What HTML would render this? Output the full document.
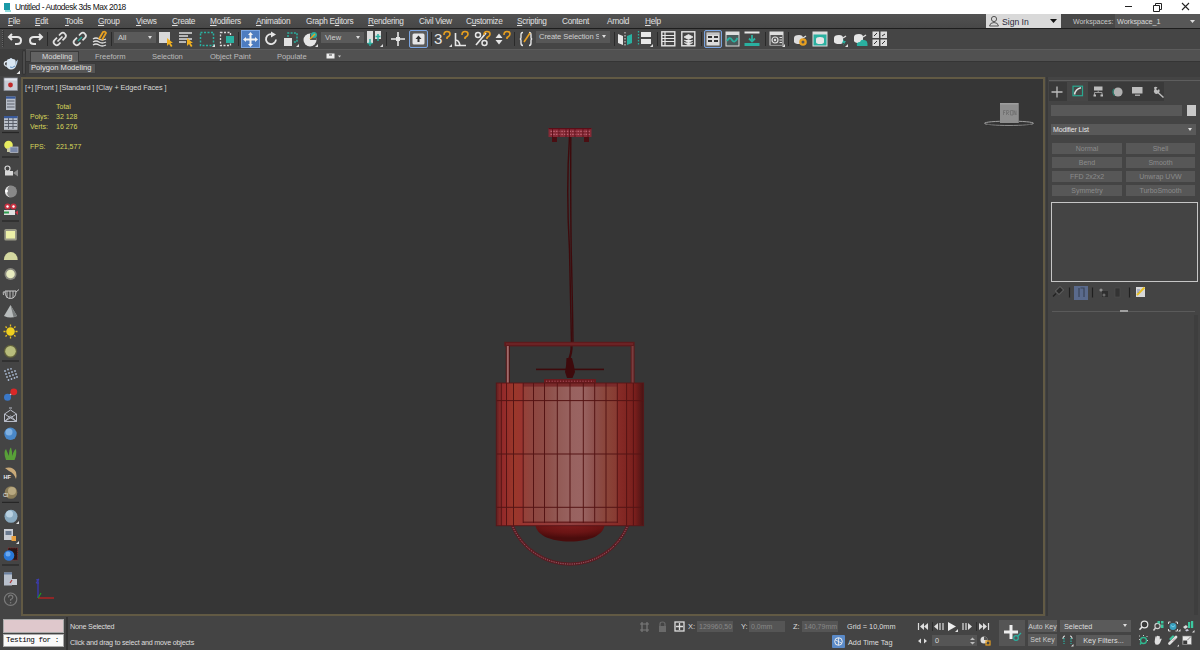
<!DOCTYPE html>
<html><head><meta charset="utf-8">
<style>
*{margin:0;padding:0;box-sizing:border-box}
html,body{width:1200px;height:650px;overflow:hidden;background:#444;font-family:"Liberation Sans",sans-serif;position:relative}
.a{position:absolute}
.t{position:absolute;white-space:nowrap;color:#d6d6d6;font-size:8px;line-height:10px}
svg{position:absolute;overflow:visible}
#title{left:0;top:0;width:1200px;height:14px;background:#fff}
#menu{left:0;top:14px;width:1200px;height:15px;background:linear-gradient(#525252,#474747);border-bottom:1px solid #1e1e1e}
#tool{left:0;top:29px;width:1200px;height:20px;background:#454545}
#rib{left:0;top:49px;width:1200px;height:13px;background:#505050}
#rib2{left:0;top:62px;width:1200px;height:15px;background:#3e3e3e}
#left{left:0;top:49px;width:21px;height:567px;background:#444}
#vp{left:21px;top:77px;width:1024px;height:539px;background:#363636;border:2px solid #625a44}
#right{left:1045px;top:77px;width:154px;height:539px;background:#444}
#status{left:0;top:616px;width:1200px;height:34px;background:#444}
.m{position:absolute;top:16px;color:#e0e0e0;font-size:8.3px;line-height:10px;white-space:nowrap;letter-spacing:-0.3px}
.sep{position:absolute;width:1px;background:#2a2a2a}
.dd{position:absolute;background:#5a5a5a;color:#cfcfcf;font-size:7.5px;line-height:11px;padding-left:4px;white-space:nowrap;overflow:hidden}
.dd:after{content:"";position:absolute;right:4px;top:4px;border-left:2.5px solid transparent;border-right:2.5px solid transparent;border-top:3px solid #ddd}
.btn{position:absolute;background:#575757;color:#8c8c8c;font-size:7px;line-height:11px;text-align:center;white-space:nowrap}
</style></head><body><div id="title" class="a"></div>
<div id="menu" class="a"></div>
<div id="tool" class="a"></div>
<div id="rib" class="a"></div>
<div id="rib2" class="a"></div>
<div id="left" class="a"></div>
<div id="vp" class="a"></div>
<div id="right" class="a"></div>
<div id="status" class="a"></div>

<!-- title -->
<svg style="left:3px;top:2px" width="9" height="10"><path d="M1 1 L7 1 L7 8 L1 8 Z" fill="#1a9aa8"/><path d="M2 9 L8 9" stroke="#2bb" stroke-width="1"/></svg>
<div class="t" style="left:15px;top:2px;color:#111;font-size:8.4px;letter-spacing:-0.45px">Untitled - Autodesk 3ds Max 2018</div>
<svg style="left:1120px;top:0" width="75" height="14">
 <path d="M5 6.5 H12" stroke="#222" stroke-width="1"/>
 <path d="M33.5 5.5 H39.5 V11.5 H33.5 Z M35.5 5.5 V3.5 H41.5 V9.5 H39.5" stroke="#222" stroke-width="1" fill="none"/>
 <path d="M62 3 L69 10 M69 3 L62 10" stroke="#222" stroke-width="1.1"/>
</svg>

<!-- menu -->
<div class="m" style="left:8px"><u>F</u>ile</div>
<div class="m" style="left:35px"><u>E</u>dit</div>
<div class="m" style="left:65px"><u>T</u>ools</div>
<div class="m" style="left:98px"><u>G</u>roup</div>
<div class="m" style="left:136px"><u>V</u>iews</div>
<div class="m" style="left:172px"><u>C</u>reate</div>
<div class="m" style="left:210px"><u>M</u>odifiers</div>
<div class="m" style="left:256px"><u>A</u>nimation</div>
<div class="m" style="left:306px">Graph E<u>d</u>itors</div>
<div class="m" style="left:368px"><u>R</u>endering</div>
<div class="m" style="left:419px">Civil View</div>
<div class="m" style="left:466px">C<u>u</u>stomize</div>
<div class="m" style="left:517px"><u>S</u>cripting</div>
<div class="m" style="left:562px">Content</div>
<div class="m" style="left:607px">Arnold</div>
<div class="m" style="left:645px"><u>H</u>elp</div>

<!-- sign in / workspaces -->
<div class="a" style="left:986px;top:14px;width:75px;height:14px;background:#d9d9d9"></div>
<svg style="left:988px;top:15px" width="12" height="12"><circle cx="6" cy="4" r="2.6" fill="none" stroke="#555" stroke-width="1"/><path d="M1.5 11 Q2 7.5 6 7.5 Q10 7.5 10.5 11 Z" fill="none" stroke="#555" stroke-width="1"/></svg>
<div class="t" style="left:1002px;top:16.5px;color:#2a2a3a;font-size:8.6px">Sign In</div>
<svg style="left:1050px;top:19px" width="8" height="5"><path d="M0 0 H7 L3.5 4 Z" fill="#111"/></svg>
<div class="a" style="left:1061px;top:14px;width:139px;height:14px;background:#484848"></div>
<div class="t" style="left:1073px;top:16.5px;color:#c8c8c8;font-size:7px">Workspaces:</div>
<div class="a" style="left:1115px;top:14px;width:85px;height:14px;background:#575757"></div>
<div class="t" style="left:1117px;top:16.5px;color:#d8d8d8;font-size:7.3px;letter-spacing:-0.1px">Workspace_1</div>
<svg style="left:1190px;top:20px" width="6" height="4"><path d="M0 0 H5 L2.5 3 Z" fill="#ddd"/></svg>



<!-- ribbon -->
<div class="a" style="left:21px;top:49px;width:6px;height:28px;background:#3c3c3c"></div><div class="a" style="left:21.5px;top:49.5px;width:4px;height:25px;background:#4c4c4c;border:1px solid #343434;border-radius:2px"></div>
<div class="a" style="left:26px;top:49px;width:1174px;height:13px;background:#515151;border-top:1px solid #5c5c5c;border-bottom:1px solid #353535"></div>
<div class="a" style="left:30px;top:51px;width:49px;height:11px;background:#626262;border:1px solid #3a3a3a;border-bottom:none"></div>
<div class="t" style="left:42px;top:52px;font-size:7.5px;color:#dcdcdc">Modeling</div>
<div class="t" style="left:95px;top:51.7px;font-size:7.6px;letter-spacing:-0.05px;color:#bcbcbc">Freeform</div>
<div class="t" style="left:152px;top:51.7px;font-size:7.6px;letter-spacing:-0.05px;color:#bcbcbc">Selection</div>
<div class="t" style="left:210px;top:51.7px;font-size:7.6px;letter-spacing:-0.05px;color:#bcbcbc">Object Paint</div>
<div class="t" style="left:277px;top:51.7px;font-size:7.6px;letter-spacing:-0.05px;color:#bcbcbc">Populate</div>
<svg style="left:326px;top:53px" width="18" height="7"><rect x="0.5" y="0.5" width="8" height="5" fill="#eee"/><path d="M3 2 H6" stroke="#444"/><path d="M12 2.5 H15 L13.5 4.5 Z" fill="#ccc"/></svg>
<div class="a" style="left:26px;top:62px;width:1174px;height:15px;background:#3e3e3e"></div>
<div class="a" style="left:28px;top:63px;width:68px;height:11px;background:#555;border:1px solid #3c3c3c"></div>
<div class="t" style="left:31px;top:63px;font-size:7.6px;color:#e6e6e6">Polygon Modeling</div>

<!-- left command strip -->
<div class="a" style="left:0px;top:49px;width:22px;height:27px;background:#3e3e3e"></div>
<svg style="left:0px;top:50px" width="21" height="26"><path d="M7 10.5 Q7 9 11 8.8 Q15 9 15.5 10.5 L16 16 Q15 19.4 11 19.4 Q7.5 19.4 6.5 16 Z" fill="#d8e6f2"/><path d="M9.5 9 Q11 7 12.5 9" fill="#c8d8e8"/><path d="M15.5 12 L18 9.5 L16.5 16" fill="#b8d0e8"/><path d="M7 11.5 Q3.8 11.5 4.5 14.5 Q5.5 16.5 7 16" fill="none" stroke="#e0e8f0" stroke-width="1.3"/><path d="M10 17 Q12 18.5 15 16" stroke="#6090c0" stroke-width="1" fill="none"/><path d="M20 20.5 V24 H16.5 Z" fill="#e6e6e6"/></svg>
<div class="a" style="left:0px;top:77px;width:21px;height:539px;background:#444"></div>
<svg style="left:0;top:0" width="21" height="616">
 <!-- 1 render window -->
 <rect x="4" y="78" width="13.5" height="12.5" fill="#c8ccd6" stroke="#8a8e98" stroke-width="0.8"/>
 <rect x="4.5" y="78.5" width="12.5" height="2" fill="#e0e4ec"/>
 <circle cx="10.5" cy="85" r="2.4" fill="#c02828"/>
 <!-- 2 table -->
 <rect x="6" y="96.5" width="9.5" height="13.5" fill="#b8bec8"/>
 <rect x="6" y="96.5" width="9.5" height="2.2" fill="#3a5a9a"/>
 <path d="M7 101 H14.5 M7 104 H14.5 M7 107 H14.5" stroke="#505560" stroke-width="0.9"/>
 <!-- 3 wide table -->
 <rect x="4" y="116" width="13.5" height="13.8" fill="#b8bec8"/>
 <rect x="4" y="116" width="13.5" height="2.2" fill="#3a5a9a"/>
 <path d="M4.5 120.5 H17 M4.5 123.5 H17 M4.5 126.5 H17 M8.5 118 V129 M13 118 V129" stroke="#505560" stroke-width="0.9"/>
 <path d="M2 132.5 H19" stroke="#262626" stroke-width="1.2"/>
 <!-- 4 bulb -->
 <circle cx="8.5" cy="145" r="4.3" fill="#e8ec60"/>
 <rect x="7" y="148" width="3" height="4" fill="#c8c8a0"/>
 <rect x="10" y="147" width="8" height="5.5" fill="#7a88a8" stroke="#c0c4cc" stroke-width="0.7"/>
 <path d="M2 157 H19" stroke="#262626" stroke-width="1.2"/>
 <!-- 5 camera -->
 <circle cx="7.5" cy="168.5" r="2.5" fill="none" stroke="#d8d8d8" stroke-width="1.2"/>
 <rect x="5" y="171" width="8" height="4.5" fill="#d8d8d8"/>
 <path d="M13 173 L18 169.5 V176.5 Z" fill="#8a8a8a"/>
 <!-- 6 half sphere -->
 <circle cx="11" cy="191.5" r="6" fill="#888"/>
 <path d="M11 185.5 A6 6 0 0 0 11 197.5 A4 6 0 0 1 11 185.5" fill="#e0e0e0"/>
 <circle cx="6.5" cy="191" r="1.5" fill="#fff"/>
 <!-- 7 red green camera -->
 <circle cx="7.5" cy="206.5" r="3" fill="#c83040"/><circle cx="13.5" cy="206.5" r="3" fill="#c83040"/>
 <circle cx="7.5" cy="206.5" r="1.2" fill="#fff"/><circle cx="13.5" cy="206.5" r="1.2" fill="#fff"/>
 <rect x="4" y="210" width="11" height="5" fill="#e0e0e0"/><path d="M4 212.5 H9" stroke="#30a050" stroke-width="2"/>
 <path d="M15 212.5 L18 210.5 V215 Z" fill="#c83040"/>
 <path d="M2 221 H19" stroke="#262626" stroke-width="1.2"/>
 <!-- 8 rect light -->
 <rect x="4.3" y="229" width="12.5" height="11.5" fill="#9a9a88" rx="1.5"/>
 <rect x="6" y="231" width="9" height="7.5" fill="#ecf0a8"/>
 <!-- 9 dome -->
 <path d="M3.9 260 A6.9 8 0 0 1 17.7 260 Z" fill="#d4d8a0"/>
 <!-- 10 disc light -->
 <circle cx="10.5" cy="274" r="6" fill="#8a8a80"/><circle cx="10.5" cy="274" r="4.3" fill="#e8ecc0"/>
 <!-- 11 teapot wire -->
 <path d="M5 291 Q5 298.5 10.5 298.5 Q16 298.5 16 291 Z" fill="none" stroke="#c8c8c8" stroke-width="1"/>
 <path d="M7 291 V298 M10 291 V298.5 M13 291 V298 M16 292 L19 289.5 M5 292.5 Q2.5 290 3.5 295" fill="none" stroke="#c8c8c8" stroke-width="0.9"/>
 <!-- 12 cone -->
 <path d="M10.5 305 L17 316 Q10.5 319 4 316 Z" fill="#b8bcbc"/>
 <path d="M10.5 305 L13.5 317 Q15.5 317 17 316 Z" fill="#787c7c"/>
 <!-- 13 sun -->
 <circle cx="10.5" cy="331.5" r="4.3" fill="#f0d020"/>
 <path d="M10.5 324.5 V326.5 M10.5 336.5 V338.5 M3.5 331.5 H5.5 M15.5 331.5 H17.5 M5.5 326.5 L6.8 327.8 M14.2 335.2 L15.5 336.5 M15.5 326.5 L14.2 327.8 M6.8 335.2 L5.5 336.5" stroke="#e8c020" stroke-width="1.3"/>
 <!-- 14 olive sphere -->
 <circle cx="10.5" cy="351.3" r="6.6" fill="#60603c"/><circle cx="10.5" cy="351.3" r="5.3" fill="#b8bc7c"/>
 <path d="M2 361 H19" stroke="#262626" stroke-width="1.2"/>
 <!-- 15 dot grid -->
 <g fill="#a8b8d0"><circle cx="5" cy="371" r="0.9"/><circle cx="8" cy="369.5" r="0.9"/><circle cx="11" cy="368.8" r="0.9"/>
 <circle cx="6" cy="374" r="0.9"/><circle cx="9" cy="373" r="0.9"/><circle cx="12" cy="372" r="0.9"/><circle cx="15" cy="371" r="0.9"/>
 <circle cx="7" cy="377" r="0.9"/><circle cx="10" cy="376" r="0.9"/><circle cx="13" cy="375" r="0.9"/><circle cx="16" cy="374" r="0.9"/>
 <circle cx="8.5" cy="380" r="0.9"/><circle cx="11.5" cy="379" r="0.9"/><circle cx="14.5" cy="378" r="0.9"/><circle cx="17" cy="377" r="0.9"/></g>
 <!-- 16 molecule -->
 <path d="M7.5 397 L13.5 392" stroke="#ccc" stroke-width="1.3"/>
 <circle cx="13.8" cy="391.8" r="3.4" fill="#d82828"/><circle cx="7.5" cy="397.3" r="3.5" fill="#3a78c8"/>
 <!-- 17 cloth -->
 <path d="M4.5 414 L10.5 410 L16.5 414 V421.5 H4.5 Z M4.5 421.5 L10.5 416 L16.5 421.5 M4.5 414 L16.5 421.5 M16.5 414 L4.5 421.5" fill="none" stroke="#b8bcc8" stroke-width="1"/>
 <path d="M9 408 H12" stroke="#b8bcc8" stroke-width="1"/>
 <!-- 18 particles ball -->
 <circle cx="10.5" cy="433.8" r="6.2" fill="#4a88c8"/><circle cx="9" cy="432" r="3.5" fill="#80b0e0"/>
 <!-- 19 plant -->
 <path d="M6 460 Q3 452 6 449 Q8 454 9 456 Q9 449 11 447.6 Q12.5 452 12 456 Q14 450 16 449 Q17 455 14.5 460 Z" fill="#58a038"/>
 <!-- 20 hair -->
 <path d="M5 468 Q13 466 16 472 Q17 476 16 479 Q14 473 9 471 Z" fill="#c8a878"/>
 <text x="3.5" y="479" font-size="5.5" font-weight="bold" fill="#eee" font-family="Liberation Sans">HF</text>
 <!-- 21 cl ball -->
 <circle cx="11" cy="492.5" r="6.3" fill="#8a7c58"/><circle cx="12" cy="491" r="4" fill="#b8a880"/>
 <text x="3" y="497" font-size="5.5" fill="#eee" font-family="Liberation Sans">Cl</text>
 <path d="M2 502.4 H19" stroke="#262626" stroke-width="1.2"/>
 <!-- 22 sphere -->
 <circle cx="11" cy="516.3" r="6.5" fill="#8aaac0"/><circle cx="9.5" cy="514" r="3.5" fill="#b8d0e0"/>
 <path d="M19 521 L19 524 L16 524 Z" fill="#ddd"/>
 <!-- 23 doc -->
 <rect x="4" y="529" width="9" height="11" fill="#c8ccd4"/><rect x="5.5" y="531" width="6" height="4" fill="#6a7a90"/>
 <rect x="11.5" y="536" width="4.5" height="5" fill="#e8a040"/>
 <path d="M19 541 L19 544 L16 544 Z" fill="#ddd"/>
 <!-- 24 blue ball box -->
 <rect x="8" y="548" width="9.5" height="12" fill="#2a1818" stroke="#a02828" stroke-width="0.7" stroke-dasharray="1 0.8"/>
 <circle cx="9" cy="555.5" r="5.3" fill="#2a78d8"/><circle cx="8" cy="554" r="2.5" fill="#6aa8f0"/>
 <path d="M2 565 H19" stroke="#262626" stroke-width="1.2"/>
 <!-- 25 doc box -->
 <rect x="4" y="572.5" width="8" height="13" fill="#b8c0cc"/><rect x="4" y="572.5" width="8" height="2" fill="#6a80a0"/>
 <rect x="12" y="579" width="5" height="6" fill="#c8ccd4"/><path d="M12 580 L10 583" stroke="#b03030" stroke-width="1.2"/>
 <!-- 26 help -->
 <circle cx="10.6" cy="599.2" r="6.2" fill="none" stroke="#7a7a7a" stroke-width="1.2"/>
 <path d="M8.5 597.5 Q8.5 595.2 10.6 595.2 Q12.8 595.2 12.8 597.3 Q12.8 598.8 10.6 599.5 V600.8" fill="none" stroke="#7a7a7a" stroke-width="1.2"/>
 <circle cx="10.6" cy="602.8" r="0.8" fill="#7a7a7a"/>
</svg>
<!-- viewport content -->
<div class="t" style="left:25px;top:82.5px;font-size:7.3px;letter-spacing:-0.08px;color:#d8d8d8">[+] [Front ] [Standard ] [Clay + Edged Faces ]</div>
<div class="t" style="left:56px;top:102px;font-size:7px;color:#d6d65a">Total</div>
<div class="t" style="left:30px;top:112px;font-size:7px;color:#d6d65a">Polys:</div>
<div class="t" style="left:56px;top:112px;font-size:7px;color:#d6d65a">32 128</div>
<div class="t" style="left:30px;top:122px;font-size:7px;color:#d6d65a">Verts:</div>
<div class="t" style="left:56px;top:122px;font-size:7px;color:#d6d65a">16 276</div>
<div class="t" style="left:30px;top:142px;font-size:7px;color:#d6d65a">FPS:</div>
<div class="t" style="left:56px;top:142px;font-size:7px;color:#d6d65a">221,577</div>
<!-- viewcube -->
<svg style="left:980px;top:98px" width="60" height="32">
 <ellipse cx="29" cy="25.3" rx="24.5" ry="2.2" fill="none" stroke="#a0a0a0" stroke-width="1"/>
 <ellipse cx="29" cy="27" rx="22" ry="1.2" fill="none" stroke="#2a2a2a" stroke-width="0.8" opacity="0.6"/>
 <rect x="20" y="5" width="19" height="20" fill="#8e8e8e"/>
 <rect x="20" y="5" width="19" height="1.5" fill="#9e9e9e"/>
 <rect x="38" y="5" width="1" height="20" fill="#7a7a7a"/>
 <path d="M23.5 17 V12.5 H25.5 M23.5 14.5 H25 M26.5 17 V12.5 H28 Q29 12.5 29 13.8 Q29 15 27 15 L29 17 M30.5 12.5 H33 V17 H30.5 Z M34 17 V12.5 L36 17 V12.5" fill="none" stroke="#6e6e6e" stroke-width="0.8"/>
</svg>
<!-- axis tripod -->
<svg style="left:33px;top:578px" width="25" height="24"><path d="M5 20 V2" stroke="#3a3ac0" stroke-width="1.2"/><path d="M5 20 H21" stroke="#c02020" stroke-width="1.3"/><path d="M5 20 L8 15" stroke="#20a020" stroke-width="1.2"/><path d="M3 2 L6 1 L3 5 L6 5" fill="none" stroke="#4040c0" stroke-width="0.8"/></svg>
<!-- lamp -->
<svg style="left:0;top:0" width="1200" height="650">
 <defs>
  <linearGradient id="outer" x1="496.3" x2="643.6" gradientUnits="userSpaceOnUse">
   <stop offset="0" stop-color="#5e2020"/>
   <stop offset="0.025" stop-color="#862a28"/>
   <stop offset="0.05" stop-color="#942a2a"/>
   <stop offset="0.12" stop-color="#9a382a"/>
   <stop offset="0.18" stop-color="#9a3430"/>
   <stop offset="0.5" stop-color="#904040"/>
   <stop offset="0.82" stop-color="#882c28"/>
   <stop offset="0.9" stop-color="#7e2420"/>
   <stop offset="0.94" stop-color="#7a1e1c"/>
   <stop offset="1" stop-color="#481414"/>
  </linearGradient>
  <linearGradient id="inner" x1="523" x2="617.3" gradientUnits="userSpaceOnUse">
   <stop offset="0" stop-color="#964038"/>
   <stop offset="0.11" stop-color="#8e4640"/>
   <stop offset="0.24" stop-color="#8e4c46"/>
   <stop offset="0.37" stop-color="#925a55"/>
   <stop offset="0.5" stop-color="#98625f"/>
   <stop offset="0.63" stop-color="#9a6462"/>
   <stop offset="0.77" stop-color="#8c4e4a"/>
   <stop offset="0.89" stop-color="#8a4438"/>
   <stop offset="1" stop-color="#883a32"/>
  </linearGradient>
  <radialGradient id="dome" cx="0.5" cy="0.05" r="0.75">
   <stop offset="0" stop-color="#7e1c1c"/>
   <stop offset="0.6" stop-color="#6a1414"/>
   <stop offset="1" stop-color="#4a0c0c"/>
  </radialGradient>
 </defs>
 <!-- canopy -->
 <rect x="548.5" y="128" width="43" height="9" fill="#862a36"/>
 <rect x="548.5" y="128" width="43" height="1.2" fill="#5a0e18"/>
 <g stroke="#b8606e" stroke-width="1.2" stroke-dasharray="1.6 1.1">
  <path d="M550.5 131.3 H590 M550.5 134.3 H590"/>
 </g>
 <path d="M552.5 129 V137 M559 129 V137 M566 129 V137 M569.5 129 V137 M575 129 V137 M583 129 V137 M588 129 V137" stroke="#5a0e18" stroke-width="0.9"/>
 <rect x="552" y="137" width="5" height="5" fill="#4a0e12"/>
 <rect x="584" y="137" width="5" height="5" fill="#4a0e12"/>
 <!-- cord -->
 <path d="M569.5 137 Q566 190 569.5 250 Q570.5 300 571.5 344" fill="none" stroke="#3e0a0c" stroke-width="1.4"/>
 <path d="M570.8 137 Q570.5 200 571.2 250 Q572.5 300 573 344" fill="none" stroke="#3e0a0c" stroke-width="1.4"/>
 <path d="M571.5 346 Q572 352 568.5 361" fill="none" stroke="#3e0a0c" stroke-width="2.2"/>
 <!-- frame -->
 <rect x="504.3" y="341.8" width="130.3" height="4.6" fill="#5e1a1c"/>
 <path d="M506 344 H633" stroke="#7a2c2e" stroke-width="1.2"/>
 <rect x="505.8" y="346" width="4" height="37" fill="#4a1212"/>
 <rect x="506.8" y="346" width="2" height="37" fill="#a06a6a"/>
 <rect x="630.6" y="346" width="4" height="37" fill="#5a1c1c"/>
 <rect x="631.6" y="346" width="2" height="37" fill="#7a3c3e"/>
 <!-- crossbar + knot -->
 <rect x="536" y="368.6" width="68" height="1.6" fill="#3e0a0c"/>
 <path d="M566.5 358 L572 358 L574 366 L575 372 L572.5 378 L567 378 L565 372 L566 366 Z" fill="#3e0a0c"/>
 <!-- top cap -->
 <rect x="544" y="379" width="52" height="4.5" fill="#6a1a1e"/>
 <path d="M546 381.2 H594" stroke="#c06070" stroke-width="0.8" stroke-dasharray="1.2 1.6"/>
 <!-- ring arc -->
 <path d="M512 525 A62.6 62.6 0 0 0 628 525" fill="none" stroke="#5a1c22" stroke-width="3.2"/>
 <path d="M512 525 A62.6 62.6 0 0 0 628 525" fill="none" stroke="#b07080" stroke-width="1" stroke-dasharray="1 1.3"/>
 <!-- dome -->
 <path d="M535.3 524 C536 535 550 541.5 570 541.5 C590 541.5 604 535 604.7 524 Z" fill="url(#dome)"/>
 <!-- outer cylinder -->
 <rect x="496.3" y="383" width="147.3" height="142.7" fill="url(#outer)"/>
 <!-- inner cylinder -->
 <rect x="523" y="383" width="94.3" height="139.7" fill="url(#inner)"/>
 <rect x="523" y="383" width="94.3" height="3.6" fill="#7a2a2a"/>
 <rect x="523" y="521.5" width="94.3" height="1.5" fill="#6a2020"/>
 <!-- wire lines -->
 <g stroke="#551414" stroke-width="1">
  <path d="M501.3 383 V526 M506.5 383 V526 M513.5 383 V526 M523.2 383 V523 M533.5 383 V523 M544.5 383 V523 M557.3 383 V523 M570 383 V523 M583.3 383 V523 M594.7 383 V523 M606 383 V523 M617.3 383 V523 M626.6 383 V526 M633.4 383 V526"/>
  <path d="M496.3 400.6 H643.6 M496.3 454 H643.6 M496.3 507.3 H643.6"/>
 </g>
 <rect x="496.3" y="383" width="147.3" height="142.7" fill="none" stroke="#5a1618" stroke-width="0.9"/>
</svg>
<!-- right command panel -->
<div class="a" style="left:1046px;top:77px;width:2px;height:539px;background:#3a3a3a"></div>
<div class="a" style="left:1049px;top:80px;width:151px;height:1px;background:#5e5e5e"></div>
<div class="a" style="left:1049px;top:82px;width:115px;height:19px;background:#3a3a3a"></div>
<div class="a" style="left:1067px;top:82px;width:21px;height:19px;background:#464646"></div>
<svg style="left:1045px;top:78px" width="130" height="26">
 <path d="M12 8.5 V19.5 M6.5 14 H17.5" stroke="#bdbdbd" stroke-width="1.3"/>
 <rect x="28" y="8.2" width="9.5" height="9.5" fill="none" stroke="#2aa890" stroke-width="1.2"/><path d="M29.5 16.5 Q30.5 11 36 9.8" fill="none" stroke="#e0e0e0" stroke-width="1.5"/>
 <rect x="49" y="8.5" width="8.5" height="4" fill="#bdbdbd"/><path d="M53.2 12.5 V14.5 M49.5 14.5 H57 M49.5 14.5 V17.5 M57 14.5 V17.5" fill="none" stroke="#9a9a9a" stroke-width="1"/><rect x="48.5" y="16.5" width="2.5" height="2" fill="#bdbdbd"/><rect x="55.5" y="16.5" width="2.5" height="2" fill="#bdbdbd"/>
 <circle cx="73" cy="14" r="4.6" fill="#b0b0b0"/><path d="M69 11 A5 5 0 0 0 69.5 17.5" fill="none" stroke="#2a7a6a" stroke-width="1.3"/>
 <rect x="87" y="9" width="10.5" height="6.5" fill="#bdbdbd"/><path d="M90 17.2 H95" stroke="#bdbdbd" stroke-width="1.2"/>
 <path d="M109 9.5 Q110.5 8 112.5 9.5 L111 11 L112.5 12.5 L114 11 Q115.5 13 114 14.5 L119 19 L118 20 L113 15.5 Q111 16.5 109.5 15 Q108 13 109.5 11.5 Z" fill="#bdbdbd"/>
</svg>
<div class="a" style="left:1051px;top:105px;width:131px;height:11px;background:#585858"></div>
<div class="a" style="left:1187px;top:105px;width:9px;height:11px;background:#c8c8c8"></div>
<div class="dd" style="left:1051px;top:124px;width:145px;height:11px;background:#595959;color:#e6e6e6;font-size:7px;padding-left:2px;letter-spacing:-0.15px">Modifier List</div>
<div class="btn" style="left:1052px;top:143px;width:70px;height:11px">Normal</div>
<div class="btn" style="left:1126px;top:143px;width:69px;height:11px">Shell</div>
<div class="btn" style="left:1052px;top:157px;width:70px;height:11px">Bend</div>
<div class="btn" style="left:1126px;top:157px;width:69px;height:11px">Smooth</div>
<div class="btn" style="left:1052px;top:171px;width:70px;height:11px">FFD 2x2x2</div>
<div class="btn" style="left:1126px;top:171px;width:69px;height:11px">Unwrap UVW</div>
<div class="btn" style="left:1052px;top:185px;width:70px;height:11px">Symmetry</div>
<div class="btn" style="left:1126px;top:185px;width:69px;height:11px">TurboSmooth</div>
<div class="a" style="left:1051px;top:202px;width:147px;height:80px;background:#444;border:1px solid #c6c6c6"></div>
<svg style="left:1045px;top:278px" width="120" height="40">
 <path d="M8 18.5 L11 15.5" stroke="#222" stroke-width="1.5"/><path d="M10.5 13 L15 8.5 L18.5 12 L14 16.5 Z" fill="#2a2a2a" stroke="#7a7a7a" stroke-width="0.8"/>
 <path d="M24.5 9.5 V19.5" stroke="#202020" stroke-width="1.2"/>
 <rect x="29" y="8" width="14" height="14" fill="#5a6a8c"/><path d="M34 10 V19 M35.5 10 H39 V19" fill="none" stroke="#3a4458" stroke-width="1.2"/>
 <path d="M47.5 9.5 V19.5" stroke="#202020" stroke-width="1.2"/>
 <circle cx="56" cy="12" r="1.6" fill="#8a8a8a"/><rect x="57" y="13" width="6" height="6" fill="#2e2e2e"/><circle cx="59" cy="17" r="1.5" fill="#6a6a6a"/>
 <rect x="70" y="10" width="5" height="9" fill="#333" stroke="#505050" stroke-width="0.6"/>
 <path d="M84.5 9.5 V19.5" stroke="#202020" stroke-width="1.2"/>
 <rect x="91" y="9" width="9" height="10" fill="#d8d8d8"/><path d="M92 17 L99.5 9.5" stroke="#e8c020" stroke-width="1.8"/><path d="M92 12 H95 M92 14 H94" stroke="#6a7aa8" stroke-width="0.8"/>
</svg>
<div class="a" style="left:1052px;top:311px;width:143px;height:1px;background:#5a5a5a"></div>
<div class="a" style="left:1120px;top:310px;width:8px;height:2px;background:#a0a0a0"></div>
<div class="a" style="left:1194px;top:315px;width:4px;height:300px;background:#3e3e3e"></div>
<!-- status bar -->
<div class="a" style="left:3px;top:619px;width:61px;height:14px;background:#dfc8cc;border:1px solid #aaa"></div>
<div class="a" style="left:3px;top:634px;width:61px;height:13px;background:#fafafa;border:1px solid #aaa"></div>
<div class="t" style="left:6px;top:635px;font-family:'Liberation Mono',monospace;font-size:7.6px;letter-spacing:-0.5px;color:#000">Testing for :</div>
<div class="a" style="left:66px;top:617px;width:2px;height:33px;background:#333"></div>
<div class="t" style="left:70px;top:622px;font-size:7.2px;letter-spacing:-0.22px;color:#dedede">None Selected</div>
<div class="t" style="left:70px;top:638px;font-size:7.2px;letter-spacing:-0.22px;color:#dedede">Click and drag to select and move objects</div>
<svg style="left:638px;top:620px" width="50" height="14">
 <path d="M2 4 H11 M2 10 H11 M4 2 V12 M9 2 V12" stroke="#7a7a7a" stroke-width="1.2"/>
 <path d="M22 6 V4 Q22 2 24.5 2 Q27 2 27 4 V6" fill="none" stroke="#6a6a6a" stroke-width="1.2"/><rect x="21" y="6" width="7" height="6" fill="#6a6a6a"/>
 <rect x="37" y="2" width="9" height="9" fill="none" stroke="#ddd" stroke-width="1.3"/><path d="M41.5 3 V10 M38 6.5 H45" stroke="#ddd" stroke-width="1.3"/>
</svg>
<div class="t" style="left:688px;top:622px;font-size:7.5px;color:#ddd">X:</div>
<div class="a" style="left:697px;top:621px;width:36px;height:11px;background:#555"></div>
<div class="t" style="left:699px;top:622px;font-size:7px;color:#888">129960,50</div>
<div class="t" style="left:741px;top:622px;font-size:7.5px;color:#ddd">Y:</div>
<div class="a" style="left:749px;top:621px;width:36px;height:11px;background:#555"></div>
<div class="t" style="left:751px;top:622px;font-size:7px;color:#888">0,0mm</div>
<div class="t" style="left:793px;top:622px;font-size:7.5px;color:#ddd">Z:</div>
<div class="a" style="left:802px;top:621px;width:36px;height:11px;background:#555"></div>
<div class="t" style="left:804px;top:622px;font-size:7px;color:#888">140,79mm</div>
<div class="t" style="left:847px;top:622px;font-size:7.3px;color:#ddd">Grid = 10,0mm</div>
<div class="a" style="left:832px;top:635px;width:13px;height:13px;background:#5a8ac8;border-radius:1px"></div>
<svg style="left:833px;top:636px" width="11" height="11"><circle cx="5.5" cy="5.5" r="3.8" fill="none" stroke="#eee" stroke-width="1"/><path d="M5.5 2 V9 M2.5 4 L8.5 7" stroke="#eee" stroke-width="0.8"/></svg>
<div class="t" style="left:848px;top:638px;font-size:7.3px;color:#ddd">Add Time Tag</div>
<svg style="left:917px;top:620px" width="76" height="28">
 <path d="M1.5 3 V10" stroke="#ddd" stroke-width="1.2"/><path d="M7 3 L3 6.5 L7 10 Z M11 3 L7 6.5 L11 10 Z" fill="#ddd"/>
 <path d="M15.5 2 V11" stroke="#2e2e2e"/>
 <path d="M21 3 L17 6.5 L21 10 Z" fill="#ddd"/><path d="M23 3 V10 M26 3 V10" stroke="#ddd" stroke-width="1.2"/>
 <path d="M31 2 L39 6.5 L31 11 Z" fill="#eee"/><path d="M41 12 L38 12 L41 9 Z" fill="#ddd"/>
 <path d="M46 3 V10 M49 3 V10" stroke="#ddd" stroke-width="1.2"/><path d="M51 3 L55 6.5 L51 10 Z" fill="#ddd"/>
 <path d="M59.5 2 V11" stroke="#2e2e2e"/>
 <path d="M62 3 L66 6.5 L62 10 Z M66 3 L70 6.5 L66 10 Z" fill="#ddd"/><path d="M71.5 3 V10" stroke="#ddd" stroke-width="1.2"/>
 <path d="M1 21 L4 18.5 V23.5 Z M10 21 L7 18.5 V23.5 Z" fill="#ddd"/>
 <circle cx="67" cy="20" r="3.5" fill="#ddd"/><path d="M67 20 V16.5 A3.5 3.5 0 0 1 70.5 20 Z" fill="#555"/><rect x="69" y="21" width="4" height="4" fill="none" stroke="#e8a020" stroke-width="1.2"/>
</svg>
<div class="a" style="left:932px;top:635px;width:45px;height:11px;background:#555"></div>
<div class="t" style="left:935px;top:636px;font-size:7.3px;color:#ddd">0</div>
<svg style="left:970px;top:637px" width="5" height="8"><path d="M0 3 L2.5 0.5 L5 3 Z M0 5 L2.5 7.5 L5 5 Z" fill="#bbb"/></svg>
<div class="a" style="left:999px;top:620px;width:26px;height:26px;background:#555"></div>
<svg style="left:1001px;top:622px" width="22" height="22"><path d="M10 3 V17 M3 10 H17" stroke="#eee" stroke-width="3"/><circle cx="15" cy="16" r="2.3" fill="none" stroke="#2ab0a0" stroke-width="1.2"/><path d="M16.5 14.5 L20 11" stroke="#2ab0a0" stroke-width="1.2"/></svg>
<div class="btn" style="left:1028px;top:620px;width:29px;height:12px;color:#d0d0d0;background:#5a5a5a;line-height:13.5px">Auto Key</div>
<div class="btn" style="left:1028px;top:634px;width:29px;height:12px;color:#ccc;background:#5a5a5a;line-height:12px">Set Key</div>
<div class="dd" style="left:1060px;top:620px;width:71px;height:12px;line-height:13px;color:#ddd;font-size:7.3px">Selected</div>
<svg style="left:1061px;top:635px" width="13" height="12"><path d="M2 4 Q2 1 4 1 M9 1 Q11 1 11 4" fill="none" stroke="#ddd" stroke-width="1.1"/><path d="M3 3 L3 9 M10 3 L10 9" stroke="#2ab0a0" stroke-width="1.2" stroke-dasharray="1.5 1"/><path d="M12.5 11.5 L10 11.5 L12.5 9 Z" fill="#ddd"/></svg>
<div class="btn" style="left:1076px;top:635px;width:55px;height:11px;color:#ddd;background:#5a5a5a;font-size:7.3px">Key Filters...</div>
<svg style="left:1130px;top:615px" width="70" height="35">
 <circle cx="14.5" cy="9.5" r="3.3" fill="#3a3a3a" stroke="#e6e6e6" stroke-width="1.2"/><path d="M12 12 L9.5 14.8" stroke="#e6e6e6" stroke-width="1.6"/>
 <circle cx="27.5" cy="11" r="2.6" fill="none" stroke="#d0d0d0" stroke-width="1.1"/><path d="M25.5 13 L23.5 15.5" stroke="#d0d0d0" stroke-width="1.5"/>
 <rect x="27.5" y="6" width="2.5" height="2.5" fill="#3cc8a0"/><rect x="31" y="6" width="2.5" height="2.5" fill="#3cc8a0"/><rect x="31" y="9.5" width="2.5" height="3.5" fill="#3cc8a0"/>
 <path d="M38.5 9 V7 H40.5 M45.5 7 H47.5 V9 M47.5 14 V16 H45.5 M40.5 16 H38.5 V14" fill="none" stroke="#d8d8d8" stroke-width="1"/>
 <circle cx="43" cy="11.5" r="3.4" fill="#3aa0c0"/><path d="M41 10.5 L43 12 L45 10.5" fill="none" stroke="#9ae0f0" stroke-width="0.7"/>
 <path d="M50.5 16.5 L48 16.5 L50.5 14 Z" fill="#ddd"/>
 <path d="M53 12 L56 10 L58 12 L55 14 Z" fill="#d8d8d8"/><rect x="58" y="7" width="2.2" height="6" fill="#3cc8a0"/><rect x="61" y="6" width="2.2" height="7" fill="#3cc8a0"/><path d="M55 15 L57.5 14 L59 15.5 L56.5 16.5 Z" fill="#c8c8d8"/>
 <path d="M64.5 17.5 L62 17.5 L64.5 15 Z" fill="#ddd"/>
 <circle cx="13.5" cy="25.5" r="3" fill="none" stroke="#30b890" stroke-width="1.3"/><path d="M11.5 27.5 L10 29.5" stroke="#30b890" stroke-width="1.4"/>
 <path d="M9 21 H10 M13 20.5 H14 M17 21 V22 M17.5 25 V26 M9.5 24 V25" stroke="#ddd" stroke-width="0.9"/>
 <path d="M25.5 29.5 Q24 27 25 24 L25.5 21.5 Q26.2 21 26.8 21.5 L27 24 V21 Q27.7 20.4 28.4 21 V24 V21.3 Q29.1 20.8 29.8 21.4 V24.5 L30.8 23.5 Q31.6 23.3 31.6 24.2 L30 28 Q29 29.8 27.5 29.8 Z" fill="#e0e0e0"/>
 <path d="M39.5 28.5 L46 22" stroke="#e0e0e0" stroke-width="2.8" stroke-linecap="round"/><path d="M40.5 24 L43 21.5" stroke="#3cc8a0" stroke-width="2.2" stroke-linecap="round"/><path d="M42.5 26 L45 23.5" stroke="#a06070" stroke-width="0.6"/>
 <path d="M49 31.5 L47 31.5 L49 29.5 Z" fill="#ddd"/>
 <rect x="52.5" y="21" width="9" height="8.5" fill="#e8e8e8" stroke="#777" stroke-width="0.6"/><rect x="53.2" y="25.5" width="4" height="3.5" fill="#3a3a3a"/><path d="M57.5 25 L61 21.5" stroke="#555" stroke-width="0.7"/>
</svg>
<!-- toolbar -->
<div class="a" style="left:2px;top:30px;width:2px;height:17px;background:#3a3a3a;border-left:1px dotted #666"></div>
<svg style="left:8px;top:32px" width="16" height="14"><path d="M4 2 L1 5 L4 8 M1.5 5 H9 Q13 5 13 8.5 Q13 12 9 12 H7" fill="none" stroke="#e6e6e6" stroke-width="2"/></svg>
<svg style="left:28px;top:32px" width="16" height="14"><path d="M11 2 L14 5 L11 8 M13.5 5 H6 Q2 5 2 8.5 Q2 12 6 12 H8" fill="none" stroke="#e6e6e6" stroke-width="2"/></svg>
<div class="sep" style="left:47px;top:32px;height:14px"></div>
<svg style="left:52px;top:31px" width="16" height="16"><path d="M7 4.5 L9 2.5 Q11 0.8 13 2.8 Q15 4.8 13 6.8 L10.5 9.3 M8.5 11.5 L6.5 13.5 Q4.5 15.2 2.5 13.2 Q0.5 11.2 2.5 9.2 L5 6.7 M5.5 10.5 L10.5 5.5" fill="none" stroke="#e0e0e0" stroke-width="1.7"/></svg>
<svg style="left:72px;top:31px" width="16" height="16"><path d="M7 4.5 L9 2.5 Q11 0.8 13 2.8 Q15 4.8 13 6.8 L10.5 9.3 M8.5 11.5 L6.5 13.5 Q4.5 15.2 2.5 13.2 Q0.5 11.2 2.5 9.2 L5 6.7" fill="none" stroke="#e0e0e0" stroke-width="1.7"/><path d="M6 10 L10 6" stroke="#2aa89a" stroke-width="1.5"/></svg>
<svg style="left:91px;top:30px" width="18" height="17"><path d="M2 9 Q5 7 8 9 Q11 11 15 9 M2 12 Q5 10 8 12 Q11 14 15 12 M2 15 Q5 13 8 15 Q11 17 15 15" fill="none" stroke="#ddd" stroke-width="1.3"/><path d="M8 9 L12 2 Q14 1 15 3 L11 10" fill="none" stroke="#e8a020" stroke-width="1.8"/></svg>
<div class="sep" style="left:111px;top:32px;height:14px"></div>
<div class="dd" style="left:114px;top:32px;width:42px;height:11px">All</div>
<svg style="left:158px;top:31px" width="16" height="16"><rect x="1" y="1" width="11" height="11" fill="#d8d8d8"/><path d="M9 7 L9 15 L11 13 L13 16 L14.5 15 L12.5 12 L15 12 Z" fill="#f0b020"/></svg>
<svg style="left:178px;top:31px" width="16" height="16"><path d="M1 2 H14 M1 5 H10 M1 8 H14 M1 11 H8" stroke="#ddd" stroke-width="1.6"/><path d="M9 7 L9 15 L11 13 L13 16 L14.5 15 L12.5 12 L15 12 Z" fill="#f0b020"/></svg>
<svg style="left:199px;top:31px" width="17" height="17"><rect x="1.5" y="1.5" width="13" height="13" fill="none" stroke="#2ab0a0" stroke-width="1.5" stroke-dasharray="2 1.5"/><path d="M16 16 L13 16 L16 13 Z" fill="#ddd"/></svg>
<svg style="left:219px;top:31px" width="17" height="17"><rect x="1.5" y="1.5" width="10" height="13" fill="none" stroke="#ddd" stroke-width="1.3" stroke-dasharray="2 1.5"/><rect x="7" y="5" width="8" height="7" fill="#2ab0a0"/></svg>
<div class="sep" style="left:238px;top:32px;height:14px"></div>
<div class="a" style="left:241px;top:30px;width:19px;height:18px;background:#4d7cc0;border:1px solid #7aa4e0"></div>
<svg style="left:242px;top:31px" width="17" height="17"><path d="M8.5 1 L11 4 H9.5 V7.5 H13 V6 L16 8.5 L13 11 V9.5 H9.5 V13 H11 L8.5 16 L6 13 H7.5 V9.5 H4 V11 L1 8.5 L4 6 V7.5 H7.5 V4 H6 Z" fill="#f2f2f2"/></svg>
<svg style="left:264px;top:31px" width="15" height="16"><path d="M12 8.5 A5 5 0 1 1 9 3.5" fill="none" stroke="#e6e6e6" stroke-width="1.8"/><path d="M7 0.5 L12 3.5 L7 6.5 Z" fill="#e6e6e6"/></svg>
<svg style="left:283px;top:31px" width="17" height="17"><rect x="1" y="7" width="8" height="8" fill="#e0e0e0"/><path d="M5 6 V2 H14 V11 H10" fill="none" stroke="#2ab0a0" stroke-width="1.5" stroke-dasharray="2 1.3"/><path d="M16 16 L13 16 L16 13 Z" fill="#ddd"/></svg>
<svg style="left:302px;top:30px" width="17" height="18"><circle cx="8" cy="10" r="6.5" fill="#e6e6e6"/><path d="M8 10 L8 3.5 A6.5 6.5 0 0 1 14.5 10 Z" fill="#555"/><circle cx="12" cy="5" r="3" fill="#2ab0a0"/><path d="M8 9 L13 4" stroke="#e8a020" stroke-width="1.5"/><path d="M16 17 L13 17 L16 14 Z" fill="#ddd"/></svg>
<div class="dd" style="left:321px;top:32px;width:43px;height:11px">View</div>
<svg style="left:366px;top:30px" width="18" height="18"><rect x="1" y="1" width="6" height="12" fill="#ddd"/><rect x="9" y="1" width="6" height="8" fill="#ddd"/><path d="M4 9 V16 M1.5 13.5 H6.5 M12 4 V11 M9.5 6.5 H14.5" stroke="#2ab0a0" stroke-width="1.5"/><path d="M17 17 L14 17 L17 14 Z" fill="#ddd"/></svg>
<div class="sep" style="left:386px;top:32px;height:14px"></div>
<svg style="left:390px;top:31px" width="16" height="16"><path d="M8 1 V15 M1 8 H15" stroke="#e6e6e6" stroke-width="1.6"/><rect x="6" y="6" width="4" height="4" fill="#e6e6e6"/></svg>
<div class="a" style="left:409px;top:30px;width:19px;height:18px;background:#5b5b5b;border:1px solid #7aa4e0;border-radius:2px"></div>
<svg style="left:412px;top:33px" width="13" height="12"><rect x="0.5" y="0.5" width="12" height="11" rx="1.5" fill="#e6e6e6"/><path d="M6.5 2.5 L9.5 6 H7.5 V9 H5.5 V6 H3.5 Z" fill="#333"/></svg>
<div class="sep" style="left:431px;top:32px;height:14px"></div>
<div class="t" style="left:434px;top:30px;font-size:15px;line-height:17px;color:#e6e6e6">3</div>
<svg style="left:441px;top:30px" width="12" height="18"><path d="M3 5 Q3 1.5 6 1.5 Q9 1.5 9 4 Q9 6 6 7.5 V9" fill="none" stroke="#e8a020" stroke-width="1.6"/><path d="M11 17 L8 17 L11 14 Z" fill="#ddd"/></svg>
<svg style="left:454px;top:30px" width="16" height="18"><path d="M1.5 3 V15.5 H12 M1.5 10 Q5 10 6 15.5" fill="none" stroke="#e6e6e6" stroke-width="1.6"/><path d="M8 5 Q8 1.5 11 1.5 Q14 1.5 14 4 Q14 6 11 7.5 V9" fill="none" stroke="#e8a020" stroke-width="1.6"/></svg>
<svg style="left:474px;top:30px" width="17" height="18"><path d="M2 15 L12 3" stroke="#e6e6e6" stroke-width="1.7"/><circle cx="4" cy="5" r="2.5" fill="none" stroke="#e6e6e6" stroke-width="1.5"/><circle cx="10.5" cy="13" r="2.5" fill="none" stroke="#e6e6e6" stroke-width="1.5"/><path d="M10 5 Q10 1.5 13 1.5 Q16 1.5 16 4 Q16 6 13 7.5 V9" fill="none" stroke="#e8a020" stroke-width="1.6"/></svg>
<svg style="left:494px;top:30px" width="17" height="18"><path d="M1.5 8 L5 3.5 L8.5 8 Z M1.5 10 L5 14.5 L8.5 10 Z" fill="#e6e6e6"/><path d="M10 5 Q10 1.5 13 1.5 Q16 1.5 16 4 Q16 6 13 7.5 V9" fill="none" stroke="#e8a020" stroke-width="1.6"/></svg>
<div class="sep" style="left:514px;top:32px;height:14px"></div>
<svg style="left:519px;top:31px" width="15" height="16"><path d="M4 1.5 Q2 1.5 2 4 V6.5 Q2 8 0.8 8 Q2 8 2 9.5 V12 Q2 14.5 4 14.5 M10 1.5 Q12 1.5 12 4 V6.5 Q12 8 13.2 8 Q12 8 12 9.5 V12 Q12 14.5 10 14.5" fill="none" stroke="#e6e6e6" stroke-width="1.4"/><path d="M5 11 L11 2" stroke="#e8a020" stroke-width="1.6"/></svg>
<div class="dd" style="left:536px;top:31px;width:74px;height:12px;line-height:12px;background:#575757;padding-left:3px"><span style="display:block;width:60px;overflow:hidden;font-size:7.6px;letter-spacing:-0.1px">Create Selection Se</span></div>
<div class="sep" style="left:614px;top:32px;height:14px"></div>
<svg style="left:617px;top:31px" width="16" height="16"><path d="M1 3 L6 5 V14 L1 12 Z" fill="#e6e6e6"/><path d="M15 3 L10 5 V14 L15 12 Z" fill="#2ab0a0"/><path d="M8 1 V15" stroke="#ddd" stroke-width="1" stroke-dasharray="1.5 1.5"/></svg>
<svg style="left:637px;top:30px" width="17" height="18"><rect x="4" y="2" width="10" height="5" fill="#e6e6e6"/><rect x="4" y="9" width="10" height="5" fill="#e6e6e6"/><path d="M1.5 1 V16" stroke="#2ab0a0" stroke-width="1.3" stroke-dasharray="1.5 1.5"/><path d="M16 17 L13 17 L16 14 Z" fill="#ddd"/></svg>
<div class="sep" style="left:657px;top:32px;height:14px"></div>
<svg style="left:661px;top:31px" width="15" height="16"><rect x="0.8" y="0.8" width="13" height="14" fill="none" stroke="#e6e6e6" stroke-width="1.4"/><path d="M1 4.5 H14 M1 7.5 H14 M1 10.5 H14 M4 1 V15" stroke="#e6e6e6" stroke-width="1.2"/></svg>
<svg style="left:681px;top:31px" width="15" height="16"><rect x="0.8" y="0.8" width="13" height="14" fill="none" stroke="#e6e6e6" stroke-width="1.4"/><path d="M3 6 L7.5 3.5 L12 6 L7.5 8.5 Z M3 9 L7.5 11.5 L12 9 M3 11.5 L7.5 14 L12 11.5" fill="#e6e6e6" stroke="#e6e6e6" stroke-width="0.8"/></svg>
<div class="sep" style="left:701px;top:32px;height:14px"></div>
<div class="a" style="left:704px;top:30px;width:18px;height:18px;background:#5b5b5b;border:1px solid #7aa4e0;border-radius:2px"></div>
<svg style="left:706px;top:32px" width="15" height="14"><rect x="0.5" y="0.5" width="13" height="13" fill="#ddd"/><path d="M2 5 H6 M8 5 H12 M2 9 H6 M8 9 H12" stroke="#333" stroke-width="2"/><path d="M1 2 H13" stroke="#aaa" stroke-width="1"/></svg>
<svg style="left:725px;top:31px" width="15" height="16"><rect x="0.5" y="0.5" width="14" height="15" fill="#ddd"/><rect x="1.5" y="4" width="12" height="10.5" fill="#4a5a5a"/><path d="M2 10 Q4.5 5 7 9 Q9.5 13 12.5 7" fill="none" stroke="#2ab0a0" stroke-width="1.8"/></svg>
<svg style="left:744px;top:31px" width="17" height="16"><rect x="0.5" y="0.5" width="15" height="2" fill="#e6e6e6"/><path d="M8 4 V10 M5 7.5 L8 10.5 L11 7.5" fill="none" stroke="#2ab0a0" stroke-width="1.8"/><rect x="0.5" y="12" width="15" height="3" fill="#2ab0a0"/></svg>
<div class="sep" style="left:765px;top:32px;height:14px"></div>
<svg style="left:769px;top:31px" width="17" height="17"><rect x="0.5" y="0.5" width="14" height="14" fill="#ddd"/><rect x="1.5" y="4" width="12" height="10" fill="#555"/><circle cx="6" cy="9" r="3" fill="none" stroke="#ddd" stroke-width="1.2"/><circle cx="6" cy="9" r="1.2" fill="#ddd"/><path d="M10.5 6.5 H13 M10.5 9 H13 M10.5 11.5 H13" stroke="#ddd"/><path d="M16 16 L13 16 L16 13 Z" fill="#ddd"/></svg>
<div class="sep" style="left:788px;top:32px;height:14px"></div>
<svg style="left:792px;top:31px" width="16" height="16"><path d="M2 7 Q2 4 7 4 Q11 4 11 7 L11 11 Q11 13 7 13 Q3 13 2 11 Z" fill="#ddd"/><path d="M11 7 L14 5" stroke="#ddd" stroke-width="1.4"/><circle cx="11" cy="11" r="3.8" fill="#e8a020"/><circle cx="11" cy="11" r="1.5" fill="#555"/></svg>
<svg style="left:812px;top:31px" width="16" height="16"><rect x="0.5" y="0.5" width="15" height="15" fill="#ddd"/><rect x="1.5" y="3.5" width="13" height="11" fill="#2ab0a0"/><path d="M4 8 Q4 6 8 6 Q12 6 12 8 V11 Q12 13 8 13 Q4 13 4 11 Z" fill="#e6e6e6"/></svg>
<svg style="left:832px;top:31px" width="17" height="17"><path d="M2 7 Q2 4 7 4 Q11 4 11 7 L11 11 Q11 13 7 13 Q3 13 2 11 Z" fill="#e6e6e6"/><path d="M11 7 L14 5" stroke="#ddd" stroke-width="1.4"/><path d="M12 8 L10 12 H12 L11 15 L14 10 H12 Z" fill="#2ab0a0"/><path d="M16 16 L13 16 L16 13 Z" fill="#ddd"/></svg>
<svg style="left:852px;top:31px" width="16" height="16"><path d="M2 6 Q2 3 7 3 Q11 3 11 6 L11 10 Q11 12 7 12 Q3 12 2 10 Z" fill="#e6e6e6"/><path d="M11 6 L14 4" stroke="#ddd" stroke-width="1.4"/><path d="M5 15 Q4 11 8 11 Q9 8 12 9 Q16 9 15.5 15 Z" fill="#2ab0a0"/></svg>
<svg style="left:872px;top:31px" width="16" height="16"><rect x="0.5" y="0.5" width="6.5" height="6.5" fill="#ddd"/><rect x="8.5" y="0.5" width="6.5" height="6.5" fill="#ddd"/><rect x="0.5" y="8.5" width="6.5" height="6.5" fill="#ddd"/><rect x="8.5" y="8.5" width="6.5" height="6.5" fill="#ddd"/><path d="M2 5 L5 2 M10 5 L13 3 M2 13 L5 10 M10 13 L13 10" stroke="#333" stroke-width="1"/></svg>
</body></html>
